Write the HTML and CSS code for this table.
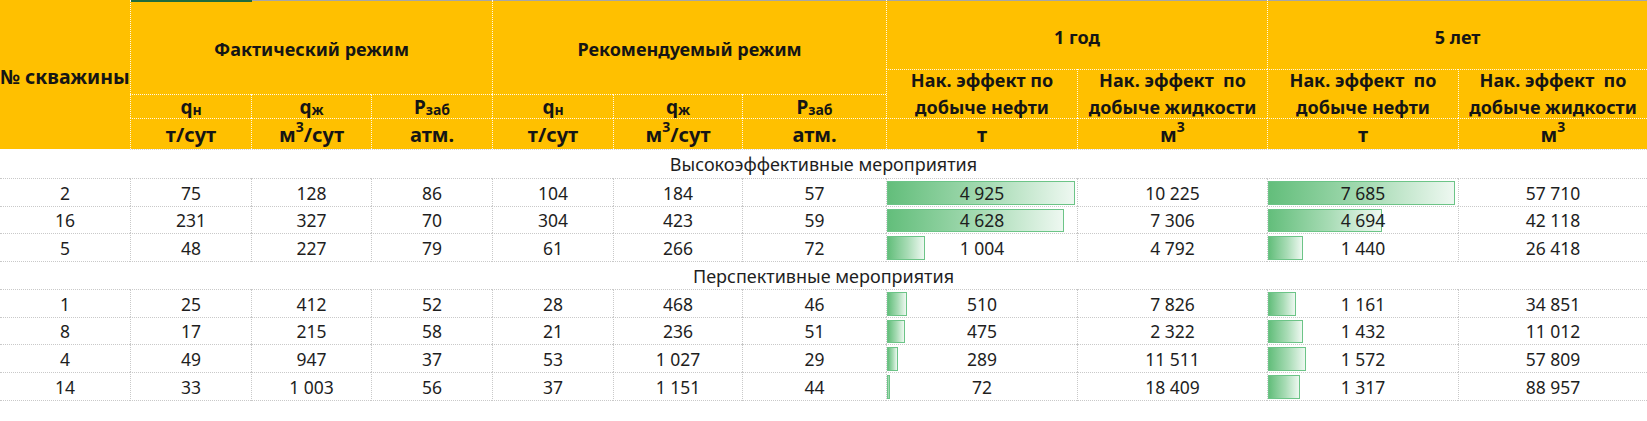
FILE: index.html
```html
<!DOCTYPE html>
<html lang="ru">
<head>
<meta charset="utf-8">
<title>Мероприятия</title>
<link rel="stylesheet" href="styles.css">
</head>
<body>
<div class="sheet">
  <div class="head">
    <div class="h c0"><span>№ скважины</span></div>
    <div class="h grp fact"><span>Фактический режим</span></div>
    <div class="h grp rec"><span>Рекомендуемый режим</span></div>
    <div class="h yr"><span>1 год</span></div>
    <div class="h yr"><span>5 лет</span></div>
    <div class="h nak"><div class="two">Нак. эффект по<br>добыче нефти</div></div>
    <div class="h nak"><div class="two">Нак. эффект&nbsp; по<br>добыче жидкости</div></div>
    <div class="h nak"><div class="two">Нак. эффект&nbsp; по<br>добыче нефти</div></div>
    <div class="h nak"><div class="two">Нак. эффект&nbsp; по<br>добыче жидкости</div></div>
    <div class="h sub"><span class="t">q<sub>н</sub></span></div>
    <div class="h sub"><span class="t">q<sub>ж</sub></span></div>
    <div class="h sub"><span class="t">P<sub>заб</sub></span></div>
    <div class="h sub"><span class="t">q<sub>н</sub></span></div>
    <div class="h sub"><span class="t">q<sub>ж</sub></span></div>
    <div class="h sub"><span class="t">P<sub>заб</sub></span></div>
    <div class="h unit"><span class="t">т/сут</span></div>
    <div class="h unit"><span class="t">м<sup>3</sup>/сут</span></div>
    <div class="h unit"><span class="t">атм.</span></div>
    <div class="h unit"><span class="t">т/сут</span></div>
    <div class="h unit"><span class="t">м<sup>3</sup>/сут</span></div>
    <div class="h unit"><span class="t">атм.</span></div>
    <div class="h unit"><span class="t">т</span></div>
    <div class="h unit"><span class="t">м<sup>3</sup></span></div>
    <div class="h unit"><span class="t">т</span></div>
    <div class="h unit"><span class="t">м<sup>3</sup></span></div>
  </div>

  <div class="section s1">Высокоэффективные мероприятия</div>

  <div class="row r28">
    <div class="d">2</div><div class="d">75</div><div class="d">128</div><div class="d">86</div>
    <div class="d">104</div><div class="d">184</div><div class="d">57</div>
    <div class="d bc"><div class="bar" style="width:188px"></div><span class="v">4 925</span></div>
    <div class="d">10 225</div>
    <div class="d bc"><div class="bar" style="width:187px"></div><span class="v">7 685</span></div>
    <div class="d">57 710</div>
  </div>
  <div class="row r27">
    <div class="d">16</div><div class="d">231</div><div class="d">327</div><div class="d">70</div>
    <div class="d">304</div><div class="d">423</div><div class="d">59</div>
    <div class="d bc"><div class="bar" style="width:177px"></div><span class="v">4 628</span></div>
    <div class="d">7 306</div>
    <div class="d bc"><div class="bar" style="width:114px"></div><span class="v">4 694</span></div>
    <div class="d">42 118</div>
  </div>
  <div class="row r29 end">
    <div class="d">5</div><div class="d">48</div><div class="d">227</div><div class="d">79</div>
    <div class="d">61</div><div class="d">266</div><div class="d">72</div>
    <div class="d bc"><div class="bar" style="width:38px"></div><span class="v">1 004</span></div>
    <div class="d">4 792</div>
    <div class="d bc"><div class="bar" style="width:35px"></div><span class="v">1 440</span></div>
    <div class="d">26 418</div>
  </div>

  <div class="section s2">Перспективные мероприятия</div>

  <div class="row r28">
    <div class="d">1</div><div class="d">25</div><div class="d">412</div><div class="d">52</div>
    <div class="d">28</div><div class="d">468</div><div class="d">46</div>
    <div class="d bc"><div class="bar" style="width:19.5px"></div><span class="v">510</span></div>
    <div class="d">7 826</div>
    <div class="d bc"><div class="bar" style="width:28px"></div><span class="v">1 161</span></div>
    <div class="d">34 851</div>
  </div>
  <div class="row r27">
    <div class="d">8</div><div class="d">17</div><div class="d">215</div><div class="d">58</div>
    <div class="d">21</div><div class="d">236</div><div class="d">51</div>
    <div class="d bc"><div class="bar" style="width:18px"></div><span class="v">475</span></div>
    <div class="d">2 322</div>
    <div class="d bc"><div class="bar" style="width:35px"></div><span class="v">1 432</span></div>
    <div class="d">11 012</div>
  </div>
  <div class="row r28">
    <div class="d">4</div><div class="d">49</div><div class="d">947</div><div class="d">37</div>
    <div class="d">53</div><div class="d">1 027</div><div class="d">29</div>
    <div class="d bc"><div class="bar" style="width:11px"></div><span class="v">289</span></div>
    <div class="d">11 511</div>
    <div class="d bc"><div class="bar" style="width:38px"></div><span class="v">1 572</span></div>
    <div class="d">57 809</div>
  </div>
  <div class="row r29 end">
    <div class="d">14</div><div class="d">33</div><div class="d">1 003</div><div class="d">56</div>
    <div class="d">37</div><div class="d">1 151</div><div class="d">44</div>
    <div class="d bc"><div class="bar" style="width:3px"></div><span class="v">72</span></div>
    <div class="d">18 409</div>
    <div class="d bc"><div class="bar" style="width:32px"></div><span class="v">1 317</span></div>
    <div class="d">88 957</div>
  </div>
</div>
</body>
</html>
```

FILE: styles.css
```css
* { box-sizing: border-box; }

html, body {
  margin: 0;
  background: #ffffff;
}

body {
  font-family: "Noto Sans", "Open Sans", sans-serif;
  color: #1e1e1e;
}

.sheet {
  width: 1647px;
  display: flex;
  flex-direction: column;
}

.head,
.row {
  display: grid;
  grid-template-columns: 130px 121px 120px 121px 121px 129px 144px 191px 190px 191px 189px;
}

.head {
  grid-template-rows: 69px 25px 24px 31px;
}

.h {
  background: #FFC000;
  color: #151515;
  font-weight: 700;
  font-size: 18px;
  display: flex;
  align-items: center;
  justify-content: center;
  text-align: center;
  white-space: nowrap;
  border-left: 1px dotted rgba(255, 255, 255, 0.9);
}

.h.c0 {
  grid-row: span 4;
  border-left: 0;
  justify-content: flex-start;
  padding-top: 4px;
  font-size: 19.5px;
}

.h.grp {
  grid-column: span 3;
  grid-row: span 2;
  padding-top: 4px;
  background: linear-gradient(#a6a6a6, #a6a6a6) 0 0 / 100% 1px no-repeat, #FFC000;
}

.h.fact {
  background:
    linear-gradient(#1f6b3d, #1f6b3d) 0 0 / 121px 2px no-repeat,
    linear-gradient(#a6a6a6, #a6a6a6) 0 0 / 100% 1px no-repeat,
    #FFC000;
}

.h.yr {
  grid-column: span 2;
  padding-top: 4px;
  background: linear-gradient(#a6a6a6, #a6a6a6) 0 0 / 100% 1px no-repeat, #FFC000;
}

.h.nak {
  grid-row: span 2;
  border-top: 1px dotted rgba(255, 255, 255, 0.9);
}

.two {
  height: 48px;
  line-height: 27px;
  display: flex;
  align-items: center;
  justify-content: center;
}

.h.sub {
  border-top: 1px dotted rgba(255, 255, 255, 0.9);
  align-items: flex-start;
  font-size: 19px;
}

.h.sub .t {
  line-height: 24px;
}

.h.sub sub {
  font-size: 14px;
  vertical-align: -1px;
  line-height: 0;
}

.h.unit {
  border-top: 1px dotted rgba(255, 255, 255, 0.9);
  font-size: 20px;
}

.h.unit .t {
  line-height: 29px;
}

.h.unit sup {
  font-size: 14px;
  vertical-align: 10px;
  line-height: 0;
}

.section {
  display: flex;
  align-items: center;
  justify-content: center;
  font-size: 18px;
  color: #1e1e1e;
}

.s1 {
  height: 29px;
  padding-top: 1px;
  background: repeating-linear-gradient(90deg, #d6d6d6 0 1px, transparent 1px 2px) 130px 0 / calc(100% - 130px) 1px no-repeat;
}

.s2 { height: 27px; }

.r27 { height: 27px; }
.r28 { height: 28px; }
.r29 { height: 29px; }

.d {
  font-size: 17.5px;
  color: #1e1e1e;
  border-top: 1px dotted #c9c9c9;
  border-left: 1px dotted #c9c9c9;
  display: grid;
  align-items: center;
  justify-items: center;
  white-space: nowrap;
}

.d:first-child {
  border-left: 0;
}

.row.end .d {
  border-bottom: 1px dotted #c9c9c9;
}

.bc > .bar,
.bc > .v {
  grid-area: 1 / 1;
}

.bar {
  justify-self: start;
  align-self: stretch;
  margin: 2px 0 1px 0;
  background: linear-gradient(90deg, #63BE7B 0%, #a9dcb6 55%, #eef8f1 100%);
  border: 1px solid #6cc487;
}

.v {
  position: relative;
}
```
